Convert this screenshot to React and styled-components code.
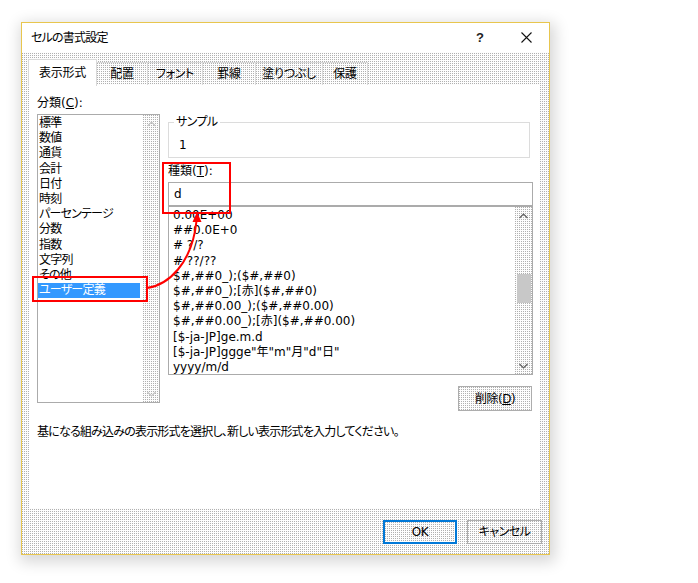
import React from "react";
import styled, { createGlobalStyle, css } from "styled-components";

const GlobalStyle = createGlobalStyle`
  html, body {
    margin : 0;
    padding : 0;
    background : #fff;
  }
  body {
    font-family : "DejaVu Sans", "Noto Sans CJK JP", sans-serif;
    font-size : 12px;
    color : #000;
    font-feature-settings : "palt";
  }
  * { box-sizing : border-box; }
`

// GIFっぽいディザの灰色 (2x2 に 1 ドット)
const dither = css`
  background-color : #fdfdfd;
  background-image : conic-gradient(from 90deg at 1px 1px, #fdfdfd 0 50%, #b0b0b0 0 75%, #fdfdfd 0);
  background-size : 2px 2px;
`

const Page = styled.div`
  position : relative;
  width : 698px;
  height : 583px;
  padding : 22px 0 0 21px;
`

const Dialog = styled.div`
  width : 529px;
  height : 533px;
  border : 1px solid #e8c64e;
  display : flex;
  flex-direction : column;
  box-shadow : 2px 4px 14px 3px rgba(0, 0, 0, 0.16);
  ${dither};
`

const TitleBar = styled.div`
  height : 29px;
  background : #fff;
  display : flex;
  align-items : center;
`

const Title = styled.div`
  flex : 1;
  padding-left : 9px;
  line-height : 14px;
  letter-spacing : -0.8px;
`

const CaptionButton = styled.div`
  width : 46px;
  height : 29px;
  display : flex;
  align-items : center;
  justify-content : center;
  font-family : "Liberation Sans", sans-serif;
  font-size : 13px;
  font-weight : bold;
  color : #222;
`

const TabStrip = styled.div`
  height : 33px;
  display : flex;
  align-items : flex-end;
  padding-left : 6px;
`

const Tab = styled.div`
  position : relative;
  height : ${p => (p.$active ? "27px" : "23px")};
  width : ${p => p.$w}px;
  margin-bottom : ${p => (p.$active ? "-1px" : "0")};
  margin-left : -1px;
  display : flex;
  align-items : center;
  justify-content : center;
  line-height : 14px;
  letter-spacing : -0.3px;
  border : 1px solid #d9d9d9;
  border-bottom : none;
  z-index : ${p => (p.$active ? 2 : 1)};
  ${p => (p.$active ? "background : #fff;" : dither)};
  &:first-child { margin-left : 0; }
`

const TabPage = styled.div`
  height : 423px;
  margin : 0 9px 0 7px;
  background : #fff;
  padding : 11px 7px 0 8px;
`

const Columns = styled.div`
  display : flex;
  align-items : flex-start;
  gap : 8px;
`

const LeftCol = styled.div`
  width : 123px;
  display : flex;
  flex-direction : column;
`

const RightCol = styled.div`
  flex : 1;
  display : flex;
  flex-direction : column;
`

const Label = styled.div`
  line-height : 14px;
  margin-top : ${p => p.$mt || 0}px;
  margin-bottom : ${p => p.$mb || 0}px;
`

const Box = styled.div`
  height : ${p => p.$h}px;
  border : 1px solid #ababab;
  display : flex;
  background : #fff;
  overflow : hidden;
`

const Items = styled.div`
  flex : 1;
  overflow : hidden;
  padding : ${p => p.$pad};
  letter-spacing : ${p => p.$ls || 0}px;
`

const ItemsInner = styled.div`
  margin-top : ${p => p.$shift || 0}px;
`

const Item = styled.div`
  line-height : ${p => p.$lh}px;
  height : ${p => p.$lh}px;
  padding-left : 1px;
  white-space : nowrap;
  ${p => p.$selected && `
    background : #3399ff;
    color : #fff;
    margin-right : 3px;
  `}
`

const ScrollBar = styled.div`
  width : ${p => p.$w}px;
  display : flex;
  flex-direction : column;
  ${dither};
`

const ScrollArrow = styled.div`
  height : 17px;
  display : flex;
  align-items : center;
  justify-content : center;
`

const Track = styled.div`
  flex : 1;
`

const Thumb = styled.div`
  margin : ${p => p.$top}px 1px 0 2px;
  height : ${p => p.$h}px;
  background : #c8c8c8;
`

const GroupBox = styled.fieldset`
  margin : 19px 3px 0 0;
  padding : 9px 10px 5px;
  min-width : 0;
  border : 1px solid #dcdcdc;
  line-height : 14px;
`

const Legend = styled.legend`
  padding : 0 2px;
  margin-left : -5px;
  line-height : 14px;
  letter-spacing : -0.6px;
`

const TextField = styled.div`
  height : 24px;
  margin-top : 4px;
  border : 1px solid #ababab;
  padding-left : 5px;
  display : flex;
  align-items : center;
  background : #fff;
`

const ButtonRow = styled.div`
  display : flex;
  justify-content : flex-end;
  gap : 10px;
  margin-top : ${p => p.$mt || 0}px;
  padding-right : ${p => p.$pr || 0}px;
`

const Button = styled.div`
  width : ${p => p.$w}px;
  height : ${p => p.$h || 24}px;
  display : flex;
  align-items : center;
  justify-content : center;
  line-height : 14px;
  letter-spacing : -0.5px;
  border : ${p => (p.$default ? "2px solid #0078d7" : "1px solid #adadad")};
  ${dither};
`

const Hint = styled.div`
  margin-top : 14px;
  line-height : 14px;
  letter-spacing : -0.8px;
`

const Footer = styled.div`
  flex : 1;
  padding : 12px 7px 0 0;
`

const Annotation = styled.svg`
  position : absolute;
  left : 0;
  top : 0;
  pointer-events : none;
`

const Chevron = ({ up, color }) => (
  <svg width="9" height="6" viewBox="0 0 9 6">
    <polyline
      points={up ? "0.5,5 4.5,1 8.5,5" : "0.5,1 4.5,5 8.5,1"}
      fill="none"
      stroke={color}
      strokeWidth="1.2"
    />
  </svg>
);

const categories = [
  "標準", "数値", "通貨", "会計", "日付", "時刻", "パーセンテージ",
  "分数", "指数", "文字列", "その他", "ユーザー定義",
];

const formats = [
  "0.00E+00",
  "##0.0E+0",
  "# ?/?",
  "# ??/??",
  "$#,##0_);($#,##0)",
  "$#,##0_);[赤]($#,##0)",
  "$#,##0.00_);($#,##0.00)",
  "$#,##0.00_);[赤]($#,##0.00)",
  "[$-ja-JP]ge.m.d",
  "[$-ja-JP]ggge\"年\"m\"月\"d\"日\"",
  "yyyy/m/d",
];

const tabs = [
  { name: "表示形式", w: 69, active: true },
  { name: "配置", w: 52 },
  { name: "フォント", w: 56 },
  { name: "罫線", w: 54 },
  { name: "塗りつぶし", w: 68 },
  { name: "保護", w: 46 },
];

function App() {
  return (
    <Page>
      <GlobalStyle />
      <Dialog>
        <TitleBar>
          <Title>セルの書式設定</Title>
          <CaptionButton>?</CaptionButton>
          <CaptionButton>
            <svg width="11" height="11" viewBox="0 0 11 11">
              <path d="M0.5 0.5 L10.5 10.5 M10.5 0.5 L0.5 10.5" stroke="#111" strokeWidth="1.1" />
            </svg>
          </CaptionButton>
        </TitleBar>

        <TabStrip>
          {tabs.map(t => (
            <Tab key={t.name} $w={t.w} $active={t.active}>{t.name}</Tab>
          ))}
        </TabStrip>

        <TabPage>
          <Columns>
            <LeftCol>
              <Label $mb={4}>分類(<u>C</u>):</Label>
              <Box $h={289}>
                <Items $pad="1px 0 0 0" $ls={-0.8}>
                  {categories.map(c => (
                    <Item key={c} $lh={15.2} $selected={c === "ユーザー定義"}>{c}</Item>
                  ))}
                </Items>
                <ScrollBar $w={16}>
                  <ScrollArrow><Chevron up color="#c4c4c4" /></ScrollArrow>
                  <Track />
                  <ScrollArrow><Chevron color="#c4c4c4" /></ScrollArrow>
                </ScrollBar>
              </Box>
            </LeftCol>

            <RightCol>
              <GroupBox>
                <Legend>サンプル</Legend>
                1
              </GroupBox>
              <Label $mt={6}>種類(<u>T</u>):</Label>
              <TextField>d</TextField>
              <Box $h={169}>
                <Items $pad="0 0 0 3px">
                  <ItemsInner $shift={1}>
                    {formats.map(f => (
                      <Item key={f} $lh={15.2}>{f}</Item>
                    ))}
                  </ItemsInner>
                </Items>
                <ScrollBar $w={17}>
                  <ScrollArrow><Chevron up color="#606060" /></ScrollArrow>
                  <Track>
                    <Thumb $top={50} $h={29} />
                  </Track>
                  <ScrollArrow><Chevron color="#606060" /></ScrollArrow>
                </ScrollBar>
              </Box>
              <ButtonRow $mt={11} $pr={1}>
                <Button $w={74} $h={25}>削除(<u>D</u>)</Button>
              </ButtonRow>
            </RightCol>
          </Columns>
          <Hint>基になる組み込みの表示形式を選択し、新しい表示形式を入力してください。</Hint>
        </TabPage>

        <Footer>
          <ButtonRow>
            <Button $w={74} $default>OK</Button>
            <Button $w={75}>キャンセル</Button>
          </ButtonRow>
        </Footer>
      </Dialog>

      <Annotation width="698" height="583" viewBox="0 0 698 583">
        <rect x="33" y="277" width="114" height="24" fill="none" stroke="#ff0000" strokeWidth="2" />
        <rect x="163" y="163" width="67" height="50" fill="none" stroke="#ff0000" strokeWidth="2" />
        <path d="M147 288 C168 285 192 264 196.5 221" fill="none" stroke="#ff0000" strokeWidth="2" />
        <polygon points="197,212 192.5,222 201.5,222" fill="#ff0000" />
      </Annotation>
    </Page>
  );
}

export default App;
